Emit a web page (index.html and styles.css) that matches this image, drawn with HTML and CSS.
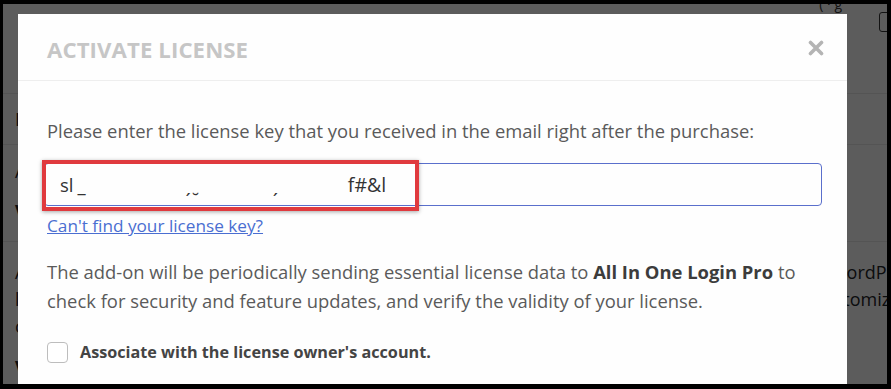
FILE: index.html
```html
<!DOCTYPE html>
<html lang="en">
<head>
<meta charset="utf-8">
<title>Activate License</title>
<link rel="stylesheet" href="styles.css">
</head>
<body>
<div class="screen">
  <div class="page">
    <div class="topbar"><span class="top-text">( · g</span><span class="top-box"></span></div>
    <div class="row row-head"><span class="cell-left">D</span></div>
    <div class="row row-a">
      <div class="cell-left">
        <div class="l1">A</div>
        <div class="l2">V</div>
      </div>
    </div>
    <div class="row row-b">
      <div class="cell-left">
        <div class="l3">A</div>
        <div class="l3">l</div>
        <div class="l3">c</div>
        <div class="l2">V</div>
      </div>
      <div class="cell-right">
        <div class="l3 r1">WordPress</div>
        <div class="l3 r2">customize</div>
      </div>
    </div>
  </div>
  <div class="overlay"></div>

  <div class="modal">
    <div class="modal-header">
      <h2 class="modal-title">ACTIVATE LICENSE</h2>
      <svg class="close" width="16" height="16" viewBox="0 0 16 16" aria-label="Close"><path d="M2.5 2.5 L13.5 13.5 M13.5 2.5 L2.5 13.5" stroke="#b4b4b4" stroke-width="3.6" stroke-linecap="round" fill="none"/></svg>
    </div>
    <div class="modal-body">
      <p class="intro">Please enter the license key that you received in the email right after the purchase:</p>
      <div class="key-wrap">
        <div class="keyfield"><span class="k k1">sl</span><span class="k k2">_</span><span class="k k3">&#x02CF; &#x032E;</span><span class="k k4">&#x02CF;</span><span class="k k5">f#&amp;l</span></div>
        <div class="highlight"></div>
      </div>
      <a class="find-link" href="#">Can't find your license key?</a>
      <p class="notice">The add-on will be periodically sending essential license data to <strong>All In One Login Pro</strong> to check for security and feature updates, and verify the validity of your license.</p>
      <label class="assoc"><span class="checkbox"></span><span class="assoc-text">Associate with the license owner's account.</span></label>
    </div>
  </div>
</div>
</body>
</html>
```

FILE: styles.css
```css
* { box-sizing: border-box; }
html, body { margin: 0; padding: 0; background: #000; }
body {
  padding: 4px 4px 5px 3px;
  font-family: "Open Sans", "Noto Sans", sans-serif;
}
.screen {
  position: relative;
  height: 380px;
  overflow: hidden;
  background: #f2f2f2;
}
.page { color: #1d2327; font-size: 17px; }
.topbar { height: 90px; border-bottom: 1px solid #dcdcde; position: relative; }
.top-text { position: absolute; right: 45px; top: -10px; font-size: 14px; color: #333; }
.top-box { position: absolute; right: -8px; top: 8px; width: 16px; height: 20px; border: 1px solid #333; border-radius: 3px; }
.row { border-bottom: 1px solid #dcdcde; display: flex; justify-content: space-between; padding-left: 12px; }
.row-head { height: 51px; align-items: center; font-size: 18px; }
.row-a { height: 97px; padding-top: 14px; flex-direction: column; }
.row-a .l1 { height: 40px; font-size: 18px; }
.l2 { font-weight: 700; font-size: 18px; }
.row-b { height: 200px; padding-top: 18px; padding-right: 0; }
.l3 { height: 27px; font-size: 18px; }
.row-b .l2 { margin-top: 14px; }
.cell-right { width: 64px; overflow: hidden; white-space: nowrap; }
.r1 { padding-left: 7px; }
.r2 { margin-left: -8px; }
.overlay { position: absolute; inset: 0; background: rgba(0, 0, 0, 0.62); }

.modal {
  position: absolute;
  left: 15px;
  top: 10px;
  width: 829px;
  height: 400px;
  background: #fefefe;
}
.modal-header {
  height: 67px;
  border-bottom: 1px solid #eeeeee;
  display: flex;
  align-items: center;
  justify-content: space-between;
  padding: 5px 23px 0 29px;
}
.modal-title {
  margin: 0;
  font-size: 22.2px;
  font-weight: 700;
  color: #c6c6c6;
  letter-spacing: 0.1px;
}
.close { display: block; margin-top: -3px; }
.modal-body { padding: 36px 25px 0 29px; color: #5a5a5a; font-size: 18.4px; }
.intro { margin: 0; line-height: 28px; }
.key-wrap { position: relative; margin: 18px 0 0 -3px; }
.keyfield {
  height: 43px;
  border: 1.5px solid #5a6fcc;
  border-radius: 4px;
  display: flex;
  align-items: center;
  padding-left: 15px;
  color: #333;
  font-size: 18.5px;
  white-space: pre;
}
.k2 { margin-left: 4px; }
.k3 { margin-left: 100px; }
.k4 { margin-left: 77px; }
.k5 { margin-left: 70px; font-size: 19.5px; }
.highlight {
  position: absolute;
  left: -2px;
  top: -3px;
  width: 377px;
  height: 51px;
  border: 4.5px solid #e03a3e;
  box-shadow: 0 1px 4px rgba(0, 0, 0, 0.35);
}
.find-link {
  display: block;
  margin-top: 8px;
  line-height: 24px;
  font-size: 17.2px;
  color: #4a6ed1;
  text-decoration: underline;
  width: max-content;
}
.notice { margin: 19px 0 0; line-height: 29px; }
.notice strong { color: #3c3c3c; }
.assoc { display: flex; align-items: center; gap: 12px; margin-top: 23px; height: 28px; }
.checkbox {
  width: 21px;
  height: 21px;
  border: 1.5px solid #bdbdbd;
  border-radius: 4px;
  background: #fff;
}
.assoc-text { font-weight: 700; color: #444; font-size: 16.2px; }
```
